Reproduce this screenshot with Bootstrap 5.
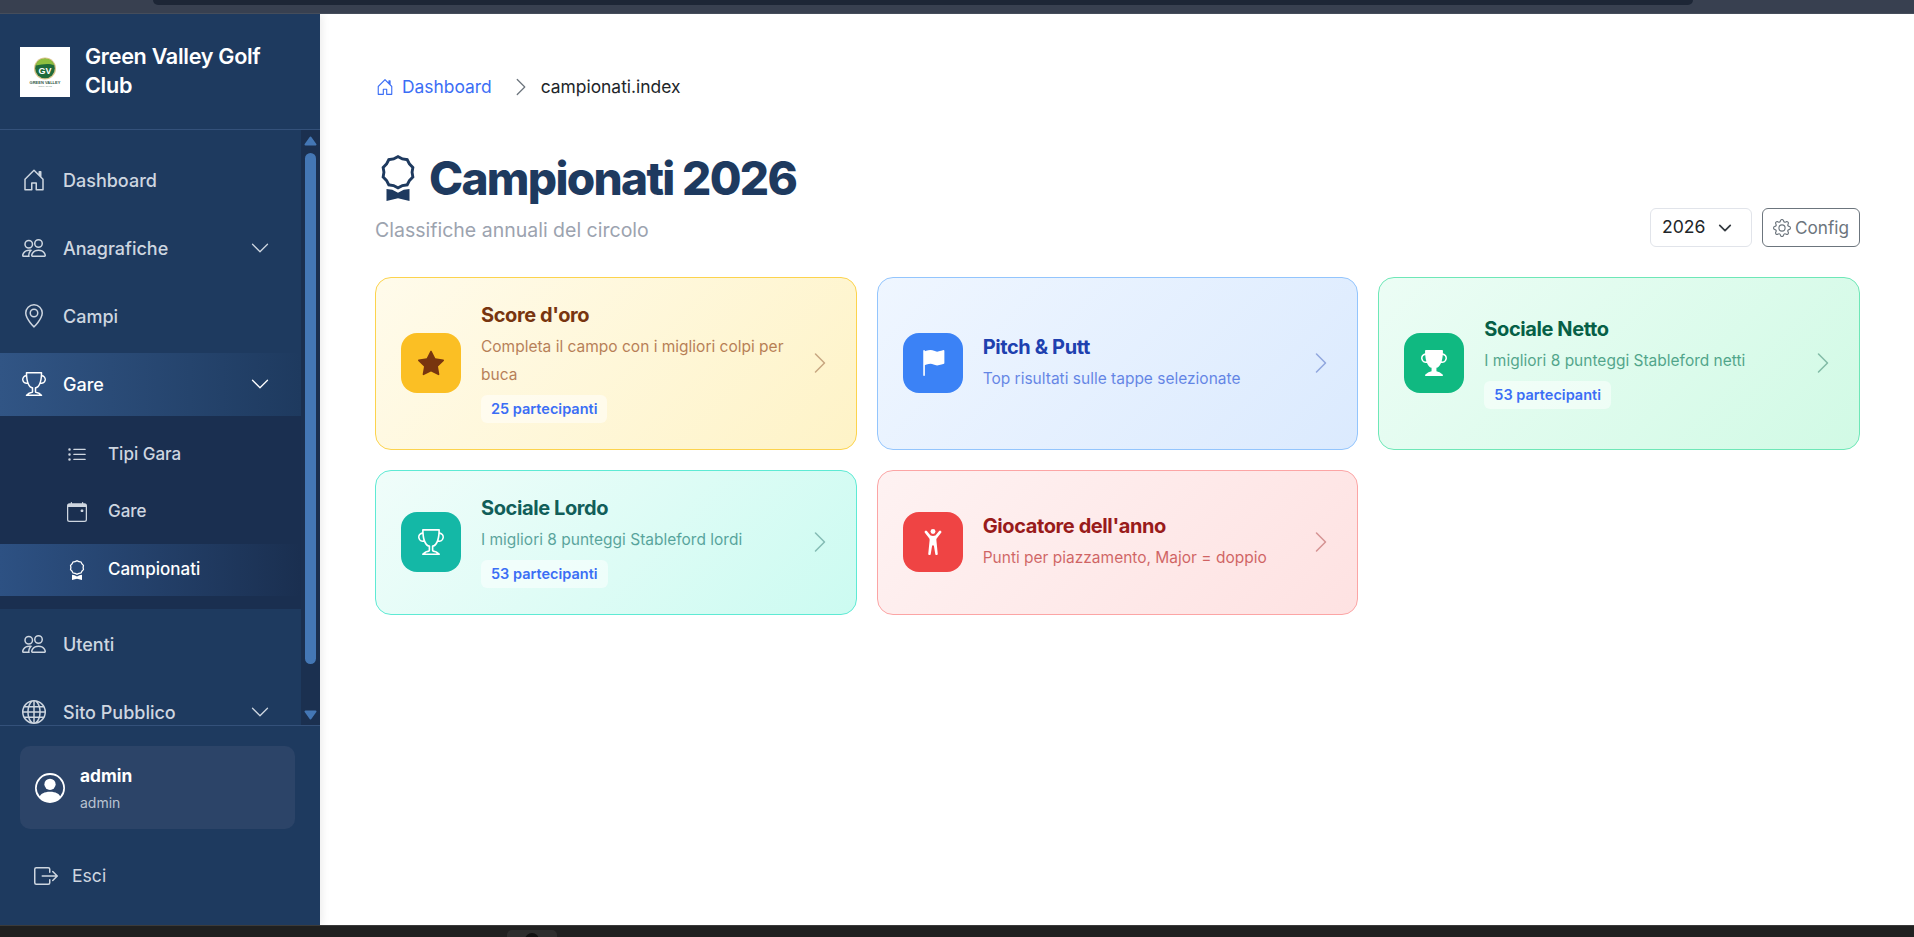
<!DOCTYPE html>
<html lang="en">
<head>
  <meta charset="UTF-8">
  <title>Campionati 2026</title>
  <link href="https://cdn.jsdelivr.net/npm/bootstrap@5.3.0/dist/css/bootstrap.min.css" rel="stylesheet">
  <style>
    html, body { height: 100%; }
    body { font-family: "Inter", "Liberation Sans", sans-serif; overflow: hidden; background: #fff; }
    .ico { width: 1em; height: 1em; fill: currentColor; flex: none; display: block; }

    .app-frame { height: 100vh; }
    .top-strip { height: 14px; flex: none; background: #384050; border-bottom: 1px solid #454d5b; }
    .top-strip-tab { width: 1540px; height: 5px; margin-left: 153px; background: #1d2636; border-radius: 0 0 12px 12px; }
    .bottom-strip { height: 12px; flex: none; background: #202020; border-top: 1px solid #3a3a3a; overflow: hidden; }
    .bottom-strip-item { width: 50px; height: 11px; margin-left: 507px; margin-top: 4px; padding-top: 3px; background: #2e2e2e; border-radius: 5px 5px 0 0; }
    .bottom-strip-dot { width: 14px; height: 14px; margin: 0 auto; background: #111; border-radius: 50%; }

    .side { width: 320px; flex: none; background: #1e3a5f; color: #fff; box-shadow: 2px 0 8px rgba(0,0,0,.08); }
    .side-head { height: 116px; flex: none; padding: 33px 20px 0; gap: 15px; border-bottom: 1px solid #34517a; }
    .side-logo { width: 50px; height: 50px; background: #fff; flex: none; }
    .side-title { font-size: 21.6px; font-weight: 600; line-height: 29px; margin-top: -5px; letter-spacing: -0.3px; }

    .side-scroll { min-height: 0; overflow: hidden; }
    .side-nav { padding-top: 18.5px; }
    .nav-row { height: 63px; margin-bottom: 5px; padding: 0 31px 0 22px; color: #ced6e0; font-size: 18px; font-weight: 500; gap: 17px; text-decoration: none; }
    .nav-row .ico { font-size: 24px; }
    .nav-row .nav-caret { font-size: 20px; margin-left: auto; }
    .nav-row.is-open { color: #fff; background: linear-gradient(90deg, #315585, #1e3a5f); margin-bottom: 0; }
    .sub-nav { background: #1a2f50; padding: 13px 0 13px; margin-bottom: 4px; }
    .sub-row { height: 52px; margin-bottom: 5.5px; padding-left: 67px; gap: 21px; color: #ced6e0; font-size: 17px; font-weight: 500; text-decoration: none; }
    .sub-row:last-child { margin-bottom: 0; }
    .sub-row .ico { font-size: 20px; }
    .sub-row.is-active { color: #fff; background: linear-gradient(90deg, #2d5183, #1a2f50); }

    .fake-scroll { width: 19px; flex: none; background: #1b3050; }
    .fake-arrow { display: block; margin: 6px auto 0; fill: #4477b5; stroke: #4477b5; stroke-width: 2; stroke-linejoin: round; }
    .fake-thumb { width: 11px; height: 511px; margin: 7px auto 0; background: #4477b5; border-radius: 6px; }
    .fake-arrow-down { margin-top: 46px; }

    .side-foot { height: 200px; flex: none; border-top: 1px solid #34517a; padding: 20px 25px 0 20px; }
    .user-box { height: 83px; padding-left: 15px; gap: 15px; background: #2c4468; border-radius: 10px; }
    .user-box .ico { font-size: 30px; }
    .user-text { padding-top: 2px; }
    .user-name { font-size: 17.3px; font-weight: 700; line-height: 27px; }
    .user-role { font-size: 14px; color: #b9c3d1; line-height: 27px; }
    .logout-row { padding: 34px 0 0 14px; gap: 14px; color: #ced6e0; font-size: 17.6px; text-decoration: none; }
    .logout-row .ico { font-size: 24px; }

    .main-area { min-width: 0; padding: 61px 54px 0 55px; }
    .crumbs { font-size: 17.4px; line-height: 24px; margin-left: 1px; }
    .crumbs a { color: #3b6ef5; text-decoration: none; gap: 8px; }
    .crumbs .ico { font-size: 18px; }
    .crumbs .crumb-sep { color: #6c757d; font-size: 20px; margin: 0 10px 0 19px; }
    .crumbs .crumb-now { color: #212529; }

    .page-title { font-size: 46px; font-weight: 800; color: #1e3a5f; line-height: 54px; margin: 52px 0 0; gap: 8px; letter-spacing: -1.7px; }
    .page-title .ico { font-size: 46px; }
    .head-row { margin-bottom: 30px; }
    .page-sub { font-size: 19.5px; color: #9ca3af; line-height: 26px; margin: 11.5px 0 4.5px; }
    .head-actions { gap: 10px; }
    .year-select { width: 102px; height: 39px; padding: 0 30px 0 11px; font-size: 17.6px; color: #212529; border-color: #e1e4ea; background-position: right 17px center; background-size: 18px 14px; }
    .config-btn { height: 39px; width: 98px; padding: 0; font-size: 17.2px; gap: 4px; }
    .config-btn .ico { font-size: 18px; }

    .champ-grid { display: grid; grid-template-columns: repeat(3, 1fr); gap: 20px; }
    .champ-card { border: 1px solid; border-radius: 16px; padding: 24px 24px 24px 25px; gap: 20px; text-decoration: none; }
    .champ-icon { width: 60px; height: 60px; border-radius: 16px; font-size: 26px; flex: none; }
    .champ-title { font-size: 20px; font-weight: 650; line-height: 26px; margin-bottom: 5px; letter-spacing: -0.4px; }
    .champ-desc { font-size: 15.5px; line-height: 27.7px; opacity: .65; }
    .champ-pill { font-size: 14.5px; font-weight: 600; color: #3b6ef5; background: rgba(255,255,255,.5); border-radius: 6px; line-height: 28px; padding: 0 10px; margin-top: 6.5px; margin-bottom: 1.8px; display: inline-block; vertical-align: top; }
    .champ-arrow { font-size: 24px; opacity: .4; margin-left: auto; }

    .tone-gold { background: linear-gradient(135deg, #fffbeb, #fef3c7); border-color: #fcd34d; color: #78350f; }
    .tone-gold .champ-icon { background: #fbbf24; color: #78350f; }
    .tone-gold .champ-desc { color: #92400e; }
    .tone-blue { background: linear-gradient(135deg, #eff6ff, #dbeafe); border-color: #93c5fd; color: #1e40af; }
    .tone-blue .champ-icon { background: #3b82f6; color: #fff; }
    .tone-blue .champ-desc { color: #1d4ed8; }
    .tone-green { background: linear-gradient(135deg, #ecfdf5, #d1fae5); border-color: #6ee7b7; color: #065f46; }
    .tone-green .champ-icon { background: #10b981; color: #fff; }
    .tone-green .champ-desc { color: #047857; }
    .tone-teal { background: linear-gradient(135deg, #f0fdfa, #ccfbf1); border-color: #5eead4; color: #115e59; }
    .tone-teal .champ-icon { background: #14b8a6; color: #fff; }
    .tone-teal .champ-desc { color: #0f766e; }
    .tone-red { background: linear-gradient(135deg, #fef2f2, #fee2e2); border-color: #fca5a5; color: #991b1b; }
    .tone-red .champ-icon { background: #ef4444; color: #fff; }
    .tone-red .champ-desc { color: #b91c1c; }
  </style>
</head>
<body>
  <svg width="0" height="0" class="position-absolute">
    <symbol id="i-house" viewBox="0 0 16 16"><path d="M8.354 1.146a.5.5 0 0 0-.708 0l-6 6A.5.5 0 0 0 1.5 7.5v7a.5.5 0 0 0 .5.5h4.5a.5.5 0 0 0 .5-.5v-4h2v4a.5.5 0 0 0 .5.5H14a.5.5 0 0 0 .5-.5v-7a.5.5 0 0 0-.146-.354L13 5.793V2.5a.5.5 0 0 0-.5-.5h-1a.5.5 0 0 0-.5.5v1.293zM2.5 14V7.707l5.5-5.5 5.5 5.5V14H10v-4a.5.5 0 0 0-.5-.5h-3a.5.5 0 0 0-.5.5v4z"/></symbol>
    <symbol id="i-people" viewBox="0 0 16 16"><path d="M15 14s1 0 1-1-1-4-5-4-5 3-5 4 1 1 1 1zm-7.978-1L7 12.996c.001-.264.167-1.03.76-1.72C8.312 10.629 9.282 10 11 10c1.717 0 2.687.63 3.24 1.276.593.69.758 1.457.76 1.72l-.008.002-.014.002zM11 7a2 2 0 1 0 0-4 2 2 0 0 0 0 4m3-2a3 3 0 1 1-6 0 3 3 0 0 1 6 0M6.936 9.28a6 6 0 0 0-1.23-.247A7 7 0 0 0 5 9c-4 0-5 3-5 4q0 1 1 1h4.216A2.24 2.24 0 0 1 5 13c0-1.01.377-2.042 1.09-2.904.243-.294.526-.569.846-.816M4.92 10A5.5 5.5 0 0 0 4 13H1c0-.26.164-1.03.76-1.724.545-.636 1.492-1.256 3.16-1.275ZM1.5 5.5a3 3 0 1 1 6 0 3 3 0 0 1-6 0m3-2a2 2 0 1 0 0 4 2 2 0 0 0 0-4"/></symbol>
    <symbol id="i-geo" viewBox="0 0 16 16"><path d="M12.166 8.94c-.524 1.062-1.234 2.12-1.96 3.07A32 32 0 0 1 8 14.58a32 32 0 0 1-2.206-2.57c-.726-.95-1.436-2.008-1.96-3.07C3.304 7.867 3 6.862 3 6a5 5 0 0 1 10 0c0 .862-.305 1.867-.834 2.94M8 16s6-5.686 6-10A6 6 0 0 0 2 6c0 4.314 6 10 6 10"/><path d="M8 8a2 2 0 1 1 0-4 2 2 0 0 1 0 4m0 1a3 3 0 1 0 0-6 3 3 0 0 0 0 6"/></symbol>
    <symbol id="i-trophy" viewBox="0 0 16 16"><path d="M2.5.5A.5.5 0 0 1 3 0h10a.5.5 0 0 1 .5.5q0 .807-.034 1.536a3 3 0 1 1-1.133 5.89c-.79 1.865-1.878 2.777-2.833 3.011v2.173l1.425.356c.194.048.377.135.537.255L13.3 15.1a.5.5 0 0 1-.3.9H3a.5.5 0 0 1-.3-.9l1.838-1.379c.16-.12.343-.207.537-.255L6.5 13.11v-2.173c-.955-.234-2.043-1.146-2.833-3.012a3 3 0 1 1-1.132-5.89A33 33 0 0 1 2.5.5m.099 2.54a2 2 0 0 0 .72 3.935c-.333-1.05-.588-2.346-.72-3.935m10.083 3.935a2 2 0 0 0 .72-3.935c-.133 1.59-.388 2.885-.72 3.935M3.504 1q.01.775.056 1.469c.13 2.028.457 3.546.87 4.667C5.294 9.48 6.484 10 7 10a.5.5 0 0 1 .5.5v2.61a1 1 0 0 1-.757.97l-1.426.356a.5.5 0 0 0-.179.085L4.5 15h7l-.638-.479a.5.5 0 0 0-.18-.085l-1.425-.356a1 1 0 0 1-.757-.97V10.5A.5.5 0 0 1 9 10c.516 0 1.706-.52 2.57-2.864.413-1.12.74-2.64.87-4.667q.045-.694.056-1.469z"/></symbol>
    <symbol id="i-trophy-fill" viewBox="0 0 16 16"><path d="M2.5.5A.5.5 0 0 1 3 0h10a.5.5 0 0 1 .5.5q0 .807-.034 1.536a3 3 0 1 1-1.133 5.89c-.79 1.865-1.878 2.777-2.833 3.011v2.173l1.425.356c.194.048.377.135.537.255L13.3 15.1a.5.5 0 0 1-.3.9H3a.5.5 0 0 1-.3-.9l1.838-1.379c.16-.12.343-.207.537-.255L6.5 13.11v-2.173c-.955-.234-2.043-1.146-2.833-3.012a3 3 0 1 1-1.132-5.89A33 33 0 0 1 2.5.5m.099 2.54a2 2 0 0 0 .72 3.935c-.333-1.05-.588-2.346-.72-3.935m10.083 3.935a2 2 0 0 0 .72-3.935c-.133 1.59-.388 2.885-.72 3.935"/></symbol>
    <symbol id="i-list" viewBox="0 0 16 16"><path fill-rule="evenodd" d="M5 11.5a.5.5 0 0 1 .5-.5h9a.5.5 0 0 1 0 1h-9a.5.5 0 0 1-.5-.5m0-4a.5.5 0 0 1 .5-.5h9a.5.5 0 0 1 0 1h-9a.5.5 0 0 1-.5-.5m0-4a.5.5 0 0 1 .5-.5h9a.5.5 0 0 1 0 1h-9a.5.5 0 0 1-.5-.5m-3 1a1 1 0 1 0 0-2 1 1 0 0 0 0 2m0 4a1 1 0 1 0 0-2 1 1 0 0 0 0 2m0 4a1 1 0 1 0 0-2 1 1 0 0 0 0 2"/></symbol>
    <symbol id="i-calendar" viewBox="0 0 16 16"><path d="M11 6.5a.5.5 0 0 1 .5-.5h1a.5.5 0 0 1 .5.5v1a.5.5 0 0 1-.5.5h-1a.5.5 0 0 1-.5-.5z"/><path d="M3.5 0a.5.5 0 0 1 .5.5V1h8V.5a.5.5 0 0 1 1 0V1h1a2 2 0 0 1 2 2v11a2 2 0 0 1-2 2H2a2 2 0 0 1-2-2V3a2 2 0 0 1 2-2h1V.5a.5.5 0 0 1 .5-.5M1 4v10a1 1 0 0 0 1 1h12a1 1 0 0 0 1-1V4z"/></symbol>
    <symbol id="i-award" viewBox="0 0 16 16"><path d="M9.669.864 8 0 6.331.864l-1.858.282-.842 1.68-1.337 1.32L2.6 6l-.306 1.854 1.337 1.32.842 1.68 1.858.282L8 12l1.669-.864 1.858-.282.842-1.68 1.337-1.32L13.4 6l.306-1.854-1.337-1.32-.842-1.68zm1.196 1.193.684 1.365 1.086 1.072L12.387 6l.248 1.506-1.086 1.072-.684 1.365-1.51.229L8 10.874l-1.355-.702-1.51-.229-.684-1.365-1.086-1.072L3.614 6l-.25-1.506 1.087-1.072.684-1.365 1.51-.229L8 1.126l1.356.702z"/><path d="M4 11.794V16l4-1 4 1v-4.206l-2.018.306L8 13.126 6.018 12.1z"/></symbol>
    <symbol id="i-globe" viewBox="0 0 16 16"><path d="M0 8a8 8 0 1 1 16 0A8 8 0 0 1 0 8m7.5-6.923c-.67.204-1.335.82-1.887 1.855A8 8 0 0 0 5.145 4H7.5zM4.09 4a9.3 9.3 0 0 1 .64-1.539 7 7 0 0 1 .597-.933A7.03 7.03 0 0 0 2.255 4zm-.582 3.5c.03-.877.138-1.718.312-2.5H1.674a7 7 0 0 0-.656 2.5zM4.847 5a12.5 12.5 0 0 0-.338 2.5H7.5V5zM8.5 5v2.5h2.99a12.5 12.5 0 0 0-.337-2.5zM4.51 8.5a12.5 12.5 0 0 0 .337 2.5H7.5V8.5zm3.99 0V11h2.653c.187-.765.306-1.608.338-2.5zM5.145 12q.208.58.468 1.068c.552 1.035 1.218 1.65 1.887 1.855V12zm.182 2.472a7 7 0 0 1-.597-.933A9.3 9.3 0 0 1 4.09 12H2.255a7 7 0 0 0 3.072 2.472M3.82 11a13.7 13.7 0 0 1-.312-2.5h-2.49c.062.89.291 1.733.656 2.5zm6.853 3.472A7 7 0 0 0 13.745 12H11.91a9.3 9.3 0 0 1-.64 1.539 7 7 0 0 1-.597.933M8.5 12v2.923c.67-.204 1.335-.82 1.887-1.855q.26-.487.468-1.068zm3.68-1h2.146c.365-.767.594-1.61.656-2.5h-2.49a13.7 13.7 0 0 1-.312 2.5m2.802-3.5a7 7 0 0 0-.656-2.5H12.18c.174.782.282 1.623.312 2.5zM11.27 2.461c.247.464.462.98.64 1.539h1.835a7 7 0 0 0-3.072-2.472c.218.284.418.598.597.933M10.855 4a8 8 0 0 0-.468-1.068C9.835 1.897 9.17 1.282 8.5 1.077V4z"/></symbol>
    <symbol id="i-person" viewBox="0 0 16 16"><path d="M11 6a3 3 0 1 1-6 0 3 3 0 0 1 6 0"/><path fill-rule="evenodd" d="M0 8a8 8 0 1 1 16 0A8 8 0 0 1 0 8m8-7a7 7 0 0 0-5.468 11.37C3.242 11.226 4.805 10 8 10s4.757 1.225 5.468 2.37A7 7 0 0 0 8 1"/></symbol>
    <symbol id="i-logout" viewBox="0 0 16 16"><path fill-rule="evenodd" d="M10 12.5a.5.5 0 0 1-.5.5h-8a.5.5 0 0 1-.5-.5v-9a.5.5 0 0 1 .5-.5h8a.5.5 0 0 1 .5.5v2a.5.5 0 0 0 1 0v-2A1.5 1.5 0 0 0 9.5 2h-8A1.5 1.5 0 0 0 0 3.5v9A1.5 1.5 0 0 0 1.5 14h8a1.5 1.5 0 0 0 1.5-1.5v-2a.5.5 0 0 0-1 0z"/><path fill-rule="evenodd" d="M15.854 8.354a.5.5 0 0 0 0-.708l-3-3a.5.5 0 0 0-.708.708L14.293 7.5H5.5a.5.5 0 0 0 0 1h8.793l-2.147 2.146a.5.5 0 0 0 .708.708z"/></symbol>
    <symbol id="i-gear" viewBox="0 0 16 16"><path d="M8 4.754a3.246 3.246 0 1 0 0 6.492 3.246 3.246 0 0 0 0-6.492M5.754 8a2.246 2.246 0 1 1 4.492 0 2.246 2.246 0 0 1-4.492 0"/><path d="M9.796 1.343c-.527-1.79-3.065-1.79-3.592 0l-.094.319a.873.873 0 0 1-1.255.52l-.292-.16c-1.64-.892-3.433.902-2.54 2.541l.159.292a.873.873 0 0 1-.52 1.255l-.319.094c-1.79.527-1.79 3.065 0 3.592l.319.094a.873.873 0 0 1 .52 1.255l-.16.292c-.892 1.64.901 3.434 2.541 2.54l.292-.159a.873.873 0 0 1 1.255.52l.094.319c.527 1.79 3.065 1.79 3.592 0l.094-.319a.873.873 0 0 1 1.255-.52l.292.16c1.64.893 3.434-.902 2.54-2.541l-.159-.292a.873.873 0 0 1 .52-1.255l.319-.094c1.79-.527 1.79-3.065 0-3.592l-.319-.094a.873.873 0 0 1-.52-1.255l.16-.292c.893-1.64-.902-3.433-2.541-2.54l-.292.159a.873.873 0 0 1-1.255-.52zm-2.633.283c.246-.835 1.428-.835 1.674 0l.094.319a1.873 1.873 0 0 0 2.693 1.115l.291-.16c.764-.415 1.6.42 1.184 1.185l-.159.292a1.873 1.873 0 0 0 1.116 2.692l.318.094c.835.246.835 1.428 0 1.674l-.319.094a1.873 1.873 0 0 0-1.115 2.693l.16.291c.415.764-.42 1.6-1.185 1.184l-.291-.159a1.873 1.873 0 0 0-2.693 1.116l-.094.318c-.246.835-1.428.835-1.674 0l-.094-.319a1.873 1.873 0 0 0-2.692-1.115l-.292.16c-.764.415-1.6-.42-1.184-1.185l.159-.291A1.873 1.873 0 0 0 1.945 8.93l-.319-.094c-.835-.246-.835-1.428 0-1.674l.319-.094A1.873 1.873 0 0 0 3.06 4.377l-.16-.292c-.415-.764.42-1.6 1.185-1.184l.292.159a1.873 1.873 0 0 0 2.692-1.115z"/></symbol>
    <symbol id="i-star" viewBox="0 0 16 16"><path d="M3.612 15.443c-.386.198-.824-.149-.746-.592l.83-4.73L.173 6.765c-.329-.314-.158-.888.283-.95l4.898-.696L7.538.792c.197-.39.73-.39.927 0l2.184 4.327 4.898.696c.441.062.612.636.282.95l-3.522 3.356.83 4.73c.078.443-.36.79-.746.592L8 13.187l-4.389 2.256z"/></symbol>
    <symbol id="i-flag" viewBox="0 0 16 16"><path d="M14.778.085A.5.5 0 0 1 15 .5V8a.5.5 0 0 1-.314.464L14.5 8l.186.464-.003.001-.006.003-.023.009a12 12 0 0 1-.397.15c-.264.095-.631.223-1.047.35-.816.252-1.879.523-2.71.523-.847 0-1.548-.28-2.158-.525l-.028-.01C7.68 8.71 7.14 8.5 6.5 8.5c-.7 0-1.638.23-2.437.477A20 20 0 0 0 3 9.342V15.5a.5.5 0 0 1-1 0V.5a.5.5 0 0 1 1 0v.282c.226-.079.496-.17.79-.26C4.606.272 5.67 0 6.5 0c.84 0 1.524.277 2.121.519l.043.018C9.286.788 9.828 1 10.5 1c.7 0 1.638-.23 2.437-.477a20 20 0 0 0 1.349-.476l.019-.007.004-.002h.001"/></symbol>
    <symbol id="i-arms" viewBox="0 0 16 16"><path d="M8 3a1.5 1.5 0 1 0 0-3 1.5 1.5 0 0 0 0 3"/><path d="m5.93 6.704-.846 8.451a.768.768 0 0 0 1.523.203l.81-4.865a.59.59 0 0 1 1.165 0l.81 4.865a.768.768 0 0 0 1.523-.203l-.845-8.451A1.5 1.5 0 0 1 10.5 5.5L13 2.284a.796.796 0 0 0-1.239-.998L9.634 3.84a.7.7 0 0 1-.33.235c-.23.074-.665.176-1.304.176-.64 0-1.074-.102-1.305-.176a.7.7 0 0 1-.329-.235L4.239 1.286a.796.796 0 0 0-1.24.998l2.5 3.216c.317.316.475.758.43 1.204Z"/></symbol>
    <symbol id="i-right" viewBox="0 0 16 16"><path fill-rule="evenodd" d="M4.646 1.646a.5.5 0 0 1 .708 0l6 6a.5.5 0 0 1 0 .708l-6 6a.5.5 0 0 1-.708-.708L10.293 8 4.646 2.354a.5.5 0 0 1 0-.708"/></symbol>
    <symbol id="i-down" viewBox="0 0 16 16"><path fill-rule="evenodd" d="M1.646 4.646a.5.5 0 0 1 .708 0L8 10.293l5.646-5.647a.5.5 0 0 1 .708.708l-6 6a.5.5 0 0 1-.708 0l-6-6a.5.5 0 0 1 0-.708"/></symbol>
  </svg>

  <div class="app-frame d-flex flex-column">
    <div class="top-strip"><div class="top-strip-tab"></div></div>

    <div class="d-flex flex-grow-1 side-scroll">
      <aside class="side d-flex flex-column">
        <div class="side-head d-flex align-items-start">
          <svg class="side-logo" viewBox="0 0 50 50">
            <circle cx="25" cy="21.5" r="11" fill="#d9c48a"/>
            <circle cx="25" cy="21.5" r="9.8" fill="#1f6b3a"/>
            <path d="M15.6 18.5a9.8 9.8 0 0 1 18.8 0c-6-2.6-12-1-18.8 0z" fill="#8fbf3f"/>
            <text x="25" y="26.5" text-anchor="middle" font-family="Liberation Sans" font-size="9" font-weight="700" fill="#fff">GV</text>
            <text x="25" y="36.5" text-anchor="middle" font-family="Liberation Sans" font-size="4" font-weight="700" fill="#33594a">GREEN VALLEY</text>
            <text x="25" y="39.8" text-anchor="middle" font-family="Liberation Sans" font-size="2.4" fill="#7b9a8c">GOLF CLUB</text>
          </svg>
          <div class="side-title">Green Valley Golf Club</div>
        </div>

        <div class="d-flex flex-grow-1 side-scroll">
          <div class="flex-grow-1 side-scroll">
            <nav class="side-nav">
              <a class="nav-row d-flex align-items-center" href="#"><svg class="ico"><use href="#i-house"/></svg>Dashboard</a>
              <a class="nav-row d-flex align-items-center" href="#"><svg class="ico"><use href="#i-people"/></svg>Anagrafiche<svg class="ico nav-caret"><use href="#i-down"/></svg></a>
              <a class="nav-row d-flex align-items-center" href="#"><svg class="ico"><use href="#i-geo"/></svg>Campi</a>
              <a class="nav-row is-open d-flex align-items-center" href="#"><svg class="ico"><use href="#i-trophy"/></svg>Gare<svg class="ico nav-caret"><use href="#i-down"/></svg></a>
              <div class="sub-nav">
                <a class="sub-row d-flex align-items-center" href="#"><svg class="ico"><use href="#i-list"/></svg>Tipi Gara</a>
                <a class="sub-row d-flex align-items-center" href="#"><svg class="ico"><use href="#i-calendar"/></svg>Gare</a>
                <a class="sub-row is-active d-flex align-items-center" href="#"><svg class="ico"><use href="#i-award"/></svg>Campionati</a>
              </div>
              <a class="nav-row d-flex align-items-center" href="#"><svg class="ico"><use href="#i-people"/></svg>Utenti</a>
              <a class="nav-row d-flex align-items-center" href="#"><svg class="ico"><use href="#i-globe"/></svg>Sito Pubblico<svg class="ico nav-caret"><use href="#i-down"/></svg></a>
            </nav>
          </div>
          <div class="fake-scroll">
            <svg class="fake-arrow" width="13" height="10"><path d="M6.5 1.5 11.5 8.5H1.5Z"/></svg>
            <div class="fake-thumb"></div>
            <svg class="fake-arrow fake-arrow-down" width="13" height="10"><path d="M1.5 1.5H11.5L6.5 8.5Z"/></svg>
          </div>
        </div>

        <div class="side-foot">
          <div class="user-box d-flex align-items-center">
            <svg class="ico"><use href="#i-person"/></svg>
            <div class="user-text">
              <div class="user-name">admin</div>
              <div class="user-role">admin</div>
            </div>
          </div>
          <a class="logout-row d-flex align-items-center" href="#"><svg class="ico"><use href="#i-logout"/></svg>Esci</a>
        </div>
      </aside>

      <main class="main-area flex-grow-1">
        <div class="crumbs d-flex align-items-center">
          <a class="d-flex align-items-center" href="#"><svg class="ico"><use href="#i-house"/></svg>Dashboard</a>
          <svg class="ico crumb-sep"><use href="#i-right"/></svg>
          <span class="crumb-now">campionati.index</span>
        </div>

        <div class="head-row d-flex justify-content-between align-items-end">
          <div>
            <h1 class="page-title d-flex align-items-center"><svg class="ico"><use href="#i-award"/></svg>Campionati 2026</h1>
            <div class="page-sub">Classifiche annuali del circolo</div>
          </div>
          <div class="head-actions d-flex align-items-center">
            <select class="form-select year-select"><option>2026</option></select>
            <a class="btn btn-outline-secondary config-btn d-flex align-items-center justify-content-center" href="#"><svg class="ico"><use href="#i-gear"/></svg>Config</a>
          </div>
        </div>

        <div class="champ-grid">
          <a class="champ-card tone-gold d-flex align-items-center" href="#">
            <div class="champ-icon d-flex align-items-center justify-content-center"><svg class="ico"><use href="#i-star"/></svg></div>
            <div>
              <div class="champ-title">Score d'oro</div>
              <div class="champ-desc">Completa il campo con i migliori colpi per buca</div>
              <span class="champ-pill">25 partecipanti</span>
            </div>
            <svg class="ico champ-arrow"><use href="#i-right"/></svg>
          </a>
          <a class="champ-card tone-blue d-flex align-items-center" href="#">
            <div class="champ-icon d-flex align-items-center justify-content-center"><svg class="ico"><use href="#i-flag"/></svg></div>
            <div>
              <div class="champ-title">Pitch &amp; Putt</div>
              <div class="champ-desc">Top risultati sulle tappe selezionate</div>
            </div>
            <svg class="ico champ-arrow"><use href="#i-right"/></svg>
          </a>
          <a class="champ-card tone-green d-flex align-items-center" href="#">
            <div class="champ-icon d-flex align-items-center justify-content-center"><svg class="ico"><use href="#i-trophy-fill"/></svg></div>
            <div>
              <div class="champ-title">Sociale Netto</div>
              <div class="champ-desc">I migliori 8 punteggi Stableford netti</div>
              <span class="champ-pill">53 partecipanti</span>
            </div>
            <svg class="ico champ-arrow"><use href="#i-right"/></svg>
          </a>
          <a class="champ-card tone-teal d-flex align-items-center" href="#">
            <div class="champ-icon d-flex align-items-center justify-content-center"><svg class="ico"><use href="#i-trophy"/></svg></div>
            <div>
              <div class="champ-title">Sociale Lordo</div>
              <div class="champ-desc">I migliori 8 punteggi Stableford lordi</div>
              <span class="champ-pill">53 partecipanti</span>
            </div>
            <svg class="ico champ-arrow"><use href="#i-right"/></svg>
          </a>
          <a class="champ-card tone-red d-flex align-items-center" href="#">
            <div class="champ-icon d-flex align-items-center justify-content-center"><svg class="ico"><use href="#i-arms"/></svg></div>
            <div>
              <div class="champ-title">Giocatore dell'anno</div>
              <div class="champ-desc">Punti per piazzamento, Major = doppio</div>
            </div>
            <svg class="ico champ-arrow"><use href="#i-right"/></svg>
          </a>
        </div>
      </main>
    </div>

    <div class="bottom-strip"><div class="bottom-strip-item"><div class="bottom-strip-dot"></div></div></div>
  </div>

  <script src="https://cdn.jsdelivr.net/npm/bootstrap@5.3.0/dist/js/bootstrap.bundle.min.js"></script>
</body>
</html>
